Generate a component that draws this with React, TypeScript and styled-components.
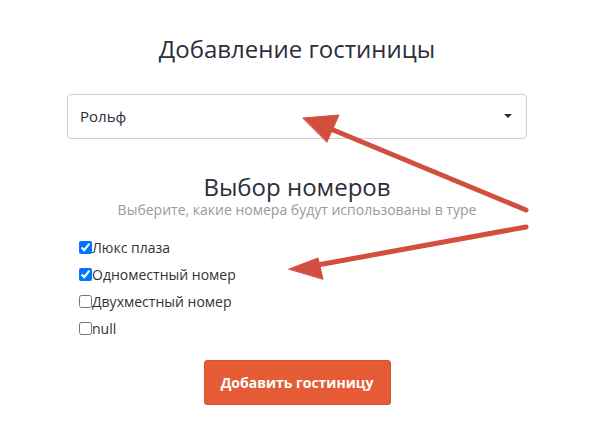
import React from "react";
import styled, { createGlobalStyle } from "styled-components";

const Global = createGlobalStyle`
  html, body { margin: 0; padding: 0; background: #fff; }
  body { font-family: "Open Sans", "Liberation Sans", sans-serif; color: #2d2d3a; }
`;

const Page = styled.div`
  position: relative;
  width: 595px;
  height: 426px;
  overflow: hidden;
`;

const Form = styled.form`
  width: 460px;
  margin-left: 67px;
  padding-top: 35px;
  display: flex;
  flex-direction: column;
`;

const Title = styled.h1`
  margin: 0;
  font-size: 24px;
  font-weight: 400;
  line-height: 1.2;
  text-align: center;
  color: #2d2d3c;
`;

const SelectBox = styled.div`
  margin-top: 30px;
  height: 45px;
  box-sizing: border-box;
  border: 1px solid #cfcfcf;
  border-radius: 4px;
  display: flex;
  align-items: center;
  justify-content: space-between;
  padding: 0 12px 0 12px;
  font-size: 15px;
  color: #2d2d3a;
`;

const Caret = styled.span`
  width: 0;
  height: 0;
  border-left: 4px solid transparent;
  border-right: 4px solid transparent;
  border-top: 4px solid #2d2d3a;
  margin-right: 2px;
`;

const SectionTitle = styled(Title)`
  margin-top: 34px;
`;

const Hint = styled.p`
  margin: 0;
  font-size: 14px;
  line-height: 1.2;
  text-align: center;
  color: #9a9a9a;
`;

const Options = styled.div`
  margin-top: 16px;
  padding-left: 12px;
  display: flex;
  flex-direction: column;
`;

const Option = styled.label`
  display: flex;
  align-items: center;
  height: 27px;
  font-size: 14px;
  color: #333;
`;

const Box = styled.input`
  width: 13px;
  height: 13px;
  margin: 0;
  flex: none;
`;

const Submit = styled.button`
  align-self: center;
  margin-top: 18px;
  width: 187px;
  height: 45px;
  border: 1px solid #d9532e;
  border-radius: 3px;
  background: #e55b35;
  color: #fff;
  font-family: "Open Sans", "Liberation Sans", sans-serif;
  font-size: 14px;
  font-weight: 700;
  cursor: pointer;
`;

const Overlay = styled.svg`
  position: absolute;
  left: 0;
  top: 0;
  pointer-events: none;
`;

const rooms = [
  { name: "Люкс плаза", checked: true },
  { name: "Одноместный номер", checked: true },
  { name: "Двухместный номер", checked: false },
  { name: "null", checked: false },
];

export default function App() {
  return (
    <Page>
      <Global />
      <Form onSubmit={(e) => e.preventDefault()}>
        <Title>Добавление гостиницы</Title>
        <SelectBox>
          <span>Рольф</span>
          <Caret />
        </SelectBox>
        <SectionTitle as="h2">Выбор номеров</SectionTitle>
        <Hint>Выберите, какие номера будут использованы в туре</Hint>
        <Options>
          {rooms.map((r) => (
            <Option key={r.name}>
              <Box type="checkbox" defaultChecked={r.checked} />
              {r.name}
            </Option>
          ))}
        </Options>
        <Submit type="submit">Добавить гостиницу</Submit>
      </Form>
      <Overlay width="595" height="426" viewBox="0 0 595 426">
        <g fill="#d24f3f" stroke="#d24f3f" strokeLinecap="round">
          <line x1="526" y1="210" x2="326" y2="127" strokeWidth="5" />
          <polygon points="303,118 339,115 327,142" strokeWidth="1" strokeLinejoin="round" />
          <line x1="526" y1="227" x2="312" y2="266" strokeWidth="5" />
          <polygon points="289,269 318,258 323,279" strokeWidth="1" strokeLinejoin="round" />
        </g>
      </Overlay>
    </Page>
  );
}
